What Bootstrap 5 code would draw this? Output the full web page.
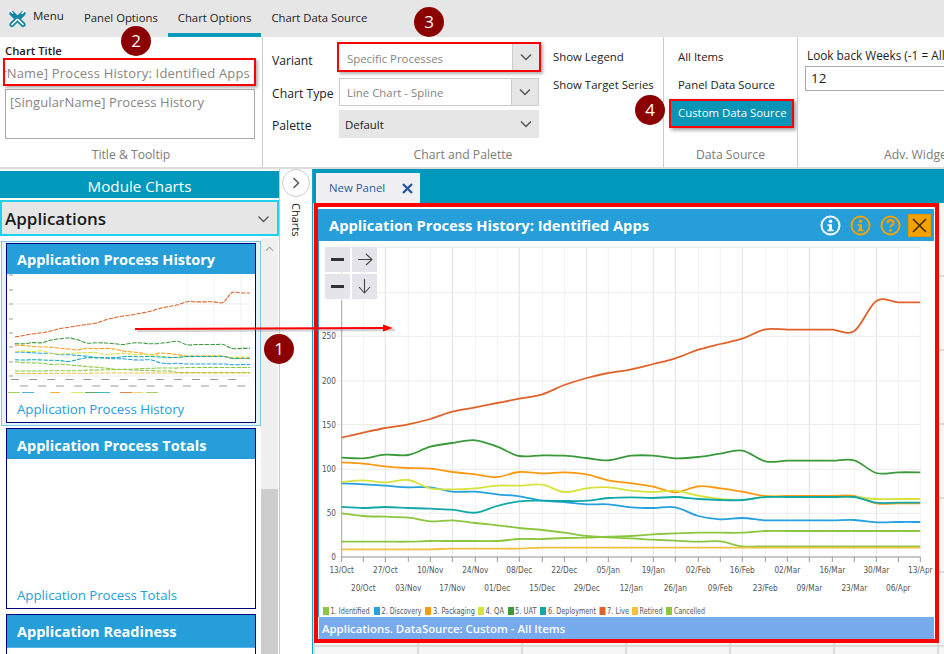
<!DOCTYPE html>
<html lang="en">
<head>
<meta charset="utf-8">
<title>Chart Options</title>
<link href="https://cdn.jsdelivr.net/npm/bootstrap@5.3.0/dist/css/bootstrap.min.css" rel="stylesheet">
<style>
html,body{height:100%;margin:0;overflow:hidden;background:#fff}
body{font-family:"Open Sans","Noto Sans",sans-serif;font-size:11.5px;color:#222}
.app-root{position:relative;width:944px;height:654px;overflow:hidden}
.tabstrip{height:37px;background:#e6e6e6}
.tabstrip .tabx{color:#222;padding:0 10px;height:37px;line-height:35px;font-size:11.3px}
.tabstrip .tabx.on{border-bottom:4px solid #0a9abb}
.menuitem{width:74px;padding-left:8px;height:37px}
.menuitem .menutxt{margin-top:-5px;margin-left:-2px}
.ribbon{height:132px;border-bottom:2px solid #dcdcdc;overflow:hidden}
.rgroup{height:130px;border-right:1px solid #ccc;flex:none;overflow:hidden}
.rgroup-body{height:105px}
.rgroup-foot{text-align:center;color:#7b7b7b;font-size:12.2px;line-height:25px;height:25px}
.g1{width:263px}.g2{width:401px}.g3{width:134px}.g4{width:146px;border-right:0}
.boldlbl{font-weight:600;font-size:11.3px;line-height:15px;padding:6px 0 0 5px;height:21px}
.titlebox{margin-left:3px;width:253px;height:28px;border:2px solid #f00;box-shadow:2px 2px 3px rgba(0,0,0,.3);color:#858585;font-size:13px;padding:0 4px 0 3px;white-space:nowrap;overflow:hidden;line-height:26px;letter-spacing:.2px}
.tipbox{margin:3px 0 0 5px;width:250px;height:50px;border:1px solid #aaa;color:#858585;font-size:13px;padding:4px 4px;line-height:17px;letter-spacing:.1px}
.ctlcol{width:281px;padding-top:5px;flex:none}
.formrow{display:flex;align-items:center;padding-left:9px}
.formrow .flabel{width:67px;font-size:12.2px;flex:none;padding-top:4px}
.row-a .flabel{padding-top:8px}
.sel{display:flex;width:200px;height:28px;border:1px solid #ccc;font-size:11.4px;color:#858585;flex:none}
.sel .val{flex:1;padding-left:7px;line-height:28px}
.sel .arr{width:27px;display:flex;align-items:center;justify-content:center;background:#e6e6e6;border-left:1px solid #ccc;flex:none}
.sel.hot{width:204px;height:30px;border:2px solid #f00;box-shadow:2px 2px 3px rgba(0,0,0,.3);margin-left:-2px}
.sel.hot .val{padding-left:8px;line-height:29px}
.sel.grey{background:#e6e6e6;border:0;color:#222}
.sel.grey .val{padding-left:6px;line-height:30px}
.sel.grey .arr{border-left:0}
.row-a{height:30px}.row-b{height:28px;margin-top:6px}.row-c{height:28px;margin-top:4px}
.togglecol{width:110px;padding:6px 0 0 9px;font-size:11.4px;flex:none;white-space:nowrap}
.togglecol div,.srcitem{height:28px;line-height:28px}
.srcbody{padding-top:6px}
.srcitem{padding-left:14px;font-size:11.4px}
.srcitem.hot{margin-left:5px;padding-left:7px;width:125px;height:29px;line-height:24px;border:2px solid #f00;background:#0a94b5;color:#fff;box-shadow:2px 2px 4px rgba(0,0,0,.4)}
.lookback{padding:10px 0 2px 9px;line-height:17px;white-space:nowrap;font-size:11.8px}
.numbox{margin-left:7px;height:25px;border:1px solid #aaa;width:170px;padding-left:5px;line-height:23px;font-size:13.5px}
.advfoot{white-space:nowrap;text-align:left;padding-left:86px}
.side{width:280px;border-right:1px solid #c8c8c8;flex:none;padding-top:2px}
.side-title{height:27px;background:#0099bb;color:#fff;text-align:center;font-size:15.2px;line-height:31px;margin-bottom:2px}
.appsel{height:36px;background:#e6e6e6;border:2px solid #1ed0f2;display:flex;align-items:center;justify-content:space-between;padding:2px 7px 0 3px;font-size:17px;font-weight:600;color:#1a1a1a}
.sidebody{height:418px;overflow:hidden;display:flex}
.cardcol{width:261px;flex:none;padding-top:5px}
.picked{margin-left:1px;width:260px;height:185px;border:1px solid #7cc7e8;background:#e5f3fb;padding:1px 4px 2px}
.chartcard{border:1px solid #00007f;border-radius:0;width:250px;background:#fff}
.chartcard .card-header{background:#259ed9;color:#fff;border:0;border-radius:0;padding:0 0 0 10px;height:30px;line-height:31px;font-weight:700;font-size:14.5px}
.chartcard .card-body{padding:0;display:flex;flex-direction:column}
.chartcard .cardlink{color:#259ed9;font-size:13.3px;padding-left:10px;line-height:18px;letter-spacing:-.05px}
.c1{height:180px}.c2{height:181px;margin:2px 0 5px 6px}.c3{height:60px;margin-left:6px}
.c1 .card-body{height:148px}
.c2 .card-body{height:149px;justify-content:flex-end;padding-bottom:4px}
.c1 .cardlink{padding-top:5px}
.c2 .card-header,.c3 .card-header{line-height:33px}
.c3 .card-header{height:33px;border-bottom:1px solid #55b2e2}
.scroller{width:17px;background:#f0f0f0;margin-top:2px;flex:none;display:flex;flex-direction:column;align-items:center}
.scroller .grip{background:#cdcdcd;width:17px;margin-top:auto;height:165px}
.strip{width:32px;flex:none;display:flex;flex-direction:column;align-items:center}
.roundbtn{width:28px;height:28px;border:1px solid #ccc;border-radius:50%;background:#fff;display:flex;align-items:center;justify-content:center}
.vtext{writing-mode:vertical-rl;font-size:11px;margin-top:6px;color:#222}
.work{width:632px;flex:none;border-left:1px solid #14a8c8;height:485px;background-color:#f6f6f6;
background-image:linear-gradient(to right,#dcdcdc 2px,transparent 2px),linear-gradient(#dcdcdc 2px,transparent 2px);background-size:104px 74px;background-position:0 0,0 32px}
.tealbar{height:34px;background:#0099bb;padding:4px 0 0 3px}
.doc-tab{width:104px;height:30px;background:#f0f0f4;color:#2a5a9c;font-size:11.4px;display:flex;align-items:center;justify-content:space-between;padding:0 7px 0 13px}
.frame{margin-left:1px;width:625px;height:440px;border:4px solid #f00;background:#fff;padding-top:2px}
.phead{height:32px;background:#259ed9;color:#fff;display:flex;align-items:center;justify-content:space-between;padding:0 3px 0 11px;width:616px}
.phead .ttl{font-weight:700;font-size:14.7px}
.pfoot{height:22px;background:#78aaee;color:#fff;font-weight:600;font-size:11.4px;line-height:23px;padding-left:3px;width:615px;margin-left:1px}
.closebtn{width:23px;height:23px;background:#f5a200;border:1px solid #e59500;display:flex;align-items:center;justify-content:center;margin-left:-2px}
.headicons{gap:9px}
.plotsvg{display:block}
.axt{font-family:"DejaVu Sans Condensed","Liberation Sans Narrow",sans-serif;font-size:8.2px;fill:#555}
.zoomface{fill:#e4e4ea}
.mark-n{position:absolute;width:30px;height:30px;border-radius:50%;background:#8b0000;color:#fff;font-size:17px;display:flex;align-items:center;justify-content:center;box-shadow:0 0 1px #fff}
.m1{left:264px;top:334px}.m2{left:121px;top:26px}.m3{left:414px;top:7px}.m4{left:635px;top:95px}
.redarrow{position:absolute;left:130px;top:318px;width:275px;height:20px;overflow:visible}
</style>
</head>
<body>
<div class="app-root">
  <nav class="tabstrip d-flex align-items-start">
    <div class="menuitem d-flex align-items-center gap-2">
      <svg width="19" height="19" viewBox="0 0 19 19" fill="none" stroke-linecap="round">
        <path d="M4 4.500 15 15.500M15 4.500 4 15.500" stroke="#1587a6" stroke-width="5.200"/>
        <path d="M10 10.500 15 15.500M9 10.500 4 15.500" stroke="#fff" stroke-width="1.700"/>
        <path d="M16.500 1.500 14 4.500M2 1.500 4.500 4" stroke="#fff" stroke-width="1.600"/>
      </svg>
      <span class="menutxt">Menu</span>
    </div>
    <div class="tabx">Panel Options</div>
    <div class="tabx on">Chart Options</div>
    <div class="tabx">Chart Data Source</div>
  </nav>

  <section class="ribbon d-flex">
    <div class="rgroup g1">
      <div class="rgroup-body">
        <div class="boldlbl">Chart Title</div>
        <div class="titlebox d-flex justify-content-end"><span>[SingularName] Process History: Identified Apps</span></div>
        <div class="tipbox">[SingularName] Process History</div>
      </div>
      <div class="rgroup-foot">Title &amp; Tooltip</div>
    </div>
    <div class="rgroup g2">
      <div class="rgroup-body d-flex">
        <div class="ctlcol">
          <div class="formrow row-a"><span class="flabel">Variant</span><div class="sel hot"><span class="val">Specific Processes</span><span class="arr"><svg width="12" height="8" viewBox="0 0 12 8" fill="none" stroke="#555" stroke-width="1.500"><path d="M1 1.500 6 6.500 11 1.500"/></svg></span></div></div>
          <div class="formrow row-b"><span class="flabel">Chart Type</span><div class="sel"><span class="val">Line Chart - Spline</span><span class="arr"><svg width="12" height="8" viewBox="0 0 12 8" fill="none" stroke="#555" stroke-width="1.500"><path d="M1 1.500 6 6.500 11 1.500"/></svg></span></div></div>
          <div class="formrow row-c"><span class="flabel">Palette</span><div class="sel grey"><span class="val">Default</span><span class="arr"><svg width="12" height="8" viewBox="0 0 12 8" fill="none" stroke="#555" stroke-width="1.500"><path d="M1 1.500 6 6.500 11 1.500"/></svg></span></div></div>
        </div>
        <div class="togglecol"><div>Show Legend</div><div>Show Target Series</div></div>
      </div>
      <div class="rgroup-foot">Chart and Palette</div>
    </div>
    <div class="rgroup g3">
      <div class="rgroup-body srcbody">
        <div class="srcitem">All Items</div>
        <div class="srcitem">Panel Data Source</div>
        <div class="srcitem hot">Custom Data Source</div>
      </div>
      <div class="rgroup-foot">Data Source</div>
    </div>
    <div class="rgroup g4">
      <div class="rgroup-body">
        <div class="lookback">Look back Weeks (-1 = All)</div>
        <div class="numbox">12</div>
      </div>
      <div class="rgroup-foot advfoot">Adv. Widget</div>
    </div>
  </section>

  <main class="d-flex">
    <aside class="side">
      <div class="side-title">Module Charts</div>
      <div class="appsel"><span>Applications</span><svg width="13" height="8" viewBox="0 0 12 8" fill="none" stroke="#555" stroke-width="1.300"><path d="M1 1.500 6 6.500 11 1.500"/></svg></div>
      <div class="sidebody">
        <div class="cardcol">
          <div class="picked">
            <div class="card chartcard c1">
              <div class="card-header">Application Process History</div>
              <div class="card-body">
                <svg id="thumb" width="248" height="121" viewBox="7 275 248 121"></svg>
                <div class="cardlink">Application Process History</div>
              </div>
            </div>
          </div>
          <div class="card chartcard c2">
            <div class="card-header">Application Process Totals</div>
            <div class="card-body"><div class="cardlink">Application Process Totals</div></div>
          </div>
          <div class="card chartcard c3">
            <div class="card-header">Application Readiness</div>
          </div>
        </div>
        <div class="scroller">
          <svg class="mt-2" width="9" height="6" viewBox="0 0 10 6" fill="none" stroke="#a6a6a6" stroke-width="1.300"><path d="M1 5 5 1 9 5"/></svg>
          <div class="grip"></div>
        </div>
      </div>
    </aside>
    <div class="strip">
      <div class="roundbtn"><svg width="8" height="12" viewBox="0 0 8 12" fill="none" stroke="#555" stroke-width="1.500"><path d="M1.500 1 6.500 6 1.500 11"/></svg></div>
      <div class="vtext">Charts</div>
    </div>
    <div class="work">
      <div class="tealbar">
        <div class="doc-tab"><span>New Panel</span><svg width="11" height="11" viewBox="0 0 11 11" stroke="#2a5a9c" stroke-width="2.400"><path d="M1 1 10 10M10 1 1 10"/></svg></div>
      </div>
      <div class="frame">
        <div class="phead">
          <span class="ttl">Application Process History: Identified Apps</span>
          <div class="d-flex align-items-center headicons">
            <svg width="21" height="21" viewBox="0 0 21 21"><circle cx="10.500" cy="10.500" r="9" fill="none" stroke="#fff" stroke-width="2"/><circle cx="10.500" cy="6.300" r="1.800" fill="#fff"/><path d="M7.500 9.200h4.500v5.300h1.500v1.800h-6v-1.800h1.500v-3.500H7.500z" fill="#fff"/></svg>
            <svg width="21" height="21" viewBox="0 0 21 21"><circle cx="10.500" cy="10.500" r="9" fill="none" stroke="#f5a200" stroke-width="2"/><circle cx="10.500" cy="6.300" r="1.800" fill="#f5a200"/><path d="M7.500 9.200h4.500v5.300h1.500v1.800h-6v-1.800h1.500v-3.500H7.500z" fill="#f5a200"/></svg>
            <svg width="21" height="21" viewBox="0 0 21 21"><circle cx="10.500" cy="10.500" r="9" fill="none" stroke="#f5a200" stroke-width="2"/><path d="M7.500 8.200c0-4 6-4 6 0 0 2-3 2-3 4.300" fill="none" stroke="#f5a200" stroke-width="2.200"/><circle cx="10.500" cy="15.300" r="1.500" fill="#f5a200"/></svg>
            <div class="closebtn"><svg width="15" height="15" viewBox="0 0 15 15" stroke="#3a2a00" stroke-width="1.500"><path d="M1 1 14 14M14 1 1 14"/></svg></div>
          </div>
        </div>
        <svg id="plot" class="plotsvg" width="616" height="376" viewBox="318 241 616 376"></svg>
        <div class="pfoot">Applications. DataSource: Custom - All Items</div>
      </div>
    </div>
  </main>

  <svg class="redarrow" viewBox="130 318 275 20">
    <path d="M137 331 395 330" stroke="#777" stroke-width="2.500" opacity=".3"/>
    <path d="M135 329 385 328" stroke="#f00" stroke-width="2" fill="none"/>
    <path d="M383 324.500 393 328 383 331.500z" fill="#f00"/>
  </svg>
  <div class="mark-n m1">1</div>
  <div class="mark-n m2">2</div>
  <div class="mark-n m3">3</div>
  <div class="mark-n m4">4</div>
</div>

<script src="https://cdn.jsdelivr.net/npm/bootstrap@5.3.0/dist/js/bootstrap.bundle.min.js"></script>
<script>
(function(){
const NS='http://www.w3.org/2000/svg';
const xs=[341.7,363.3,385.3,408.3,430.3,452.3,475.3,497.3,519.3,542.3,564.3,586.7,608.3,631.3,653.3,675.3,698.3,720.3,742.3,765.3,787.3,809.3,832.3,854.3,876.3,898.3,920.3];
const Y=z=>240+z/3;
const flat=(v,n)=>Array(n).fill(v);
const series=[
 ['#8cc63f',[820,828,830,833,844,841,849,856,864,870,878,888,892,895,899,902,905,904,919,...flat(919,8)]],
 ['#8cc63f',[905,905,905,905,903,903,903,903,897,897,894,893,890,888,883,880,878,878,878,...flat(873,8)]],
 ['#f0c040',[928,928,928,928,928,926,926,926,926,923,923,923,923,...flat(923,14)]],
 ['#25a0e0',[730,733,737,742,742,755,755,763,769,782,786,793,793,802,804,802,828,838,834,841,841,841,841,840,847,846,846]],
 ['#ff9a10',[667,671,679,684,686,696,703,711,696,700,697,703,721,730,740,757,739,745,755,768,768,768,768,768,790,790,790]],
 ['#d8e23c',[726,721,727,720,745,748,745,737,737,734,756,745,742,752,756,752,767,777,780,770,771,771,771,771,777,777,777]],
 ['#12a8a8',[801,804,801,804,806,809,818,798,784,782,783,782,774,772,774,771,777,780,780,771,771,771,771,771,788,788,788]],
 ['#3a9a3a',[653,655,644,645,620,609,601,620,648,646,647,654,661,647,647,655,651,641,632,664,662,662,662,661,699,697,697]],
 ['#e0622b',[593,578,564,553,537,515,502,489,476,463,435,414,399,388,372,355,329,312,296,268,269,269,269,273,183,187,187]]
];
function spline(ys){
  const p=ys.map((z,i)=>[xs[i],Y(z)]);
  let d=`M${p[0][0]} ${p[0][1].toFixed(1)}`;
  for(let i=0;i<p.length-1;i++){
    const a=p[Math.max(i-1,0)],b=p[i],c=p[i+1],e=p[Math.min(i+2,p.length-1)];
    const c1x=b[0]+(c[0]-a[0])/6,c1y=b[1]+(c[1]-a[1])/6,c2x=c[0]-(e[0]-b[0])/6,c2y=c[1]-(e[1]-b[1])/6;
    d+=` C${c1x.toFixed(1)} ${c1y.toFixed(1)} ${c2x.toFixed(1)} ${c2y.toFixed(1)} ${c[0]} ${c[1].toFixed(1)}`;
  }
  return d;
}
function el(parent,name,attrs,text){
  const n=document.createElementNS(NS,name);
  for(const k in attrs)n.setAttribute(k,attrs[k]);
  if(text!==undefined)n.textContent=text;
  parent.appendChild(n);return n;
}
const plot=document.getElementById('plot');
el(plot,'line',{x1:318.5,x2:318.5,y1:241,y2:617,stroke:'#259ed9'});
const major=new Set([0,2,5,8,11,14,15,18,21,24]);
xs.forEach((x,i)=>el(plot,'line',{x1:x,x2:x,y1:247,y2:557,stroke:major.has(i)?'#e2e2e2':'#f2f2f2','stroke-width':1}));
[[557,'0'],[513.3,'50'],[469.3,'100'],[424.5,'150'],[381,'200'],[336.3,'250'],[292.3,'300'],[247.3,'350']].forEach(([y,t])=>{
  el(plot,'line',{x1:337,x2:920.3,y1:y,y2:y,stroke:'#ececec','stroke-width':1});
  if(y>300)el(plot,'text',{class:'axt',x:336,y:y+3,'text-anchor':'end'},t);
});
el(plot,'line',{x1:341.7,x2:341.7,y1:300,y2:557,stroke:'#aaa'});
el(plot,'line',{x1:341.7,x2:920.3,y1:557,y2:557,stroke:'#999'});
xs.forEach(x=>el(plot,'line',{x1:x,x2:x,y1:557,y2:562,stroke:'#999'}));
const upper=['13/Oct','27/Oct','10/Nov','24/Nov','08/Dec','22/Dec','05/Jan','19/Jan','02/Feb','16/Feb','02/Mar','16/Mar','30/Mar','13/Apr'];
const lower=['20/Oct','03/Nov','17/Nov','01/Dec','15/Dec','29/Dec','12/Jan','26/Jan','09/Feb','23/Feb','09/Mar','23/Mar','06/Apr'];
upper.forEach((t,i)=>el(plot,'text',{class:'axt',x:xs[i*2],y:573,'text-anchor':'middle'},t));
lower.forEach((t,i)=>el(plot,'text',{class:'axt',x:xs[i*2+1],y:591,'text-anchor':'middle'},t));
series.forEach(([c,z])=>el(plot,'path',{d:spline(z),fill:'none',stroke:c,'stroke-width':1.8,'stroke-linejoin':'round'}));
[[323,330.6,39,'#8cc63f','1. Identified'],[374,381.6,40,'#25a0e0','2. Discovery'],[425,433,42,'#ff9a10','3. Packaging'],[478,485.5,18.5,'#d8e23c','4. QA'],[508,515,21.5,'#3a9a3a','5. UAT'],[540,548,48,'#12a8a8','6. Deployment'],[599.5,607,22,'#e0622b','7. Live'],[632,639.6,23,'#f0c040','Retired'],[666,674,31,'#8cc63f','Cancelled']].forEach(([sx,tx,w,c,t])=>{
  el(plot,'rect',{x:sx,y:607,width:6,height:8,fill:c});
  el(plot,'text',{class:'axt',x:tx,y:614,textLength:w,lengthAdjust:'spacingAndGlyphs'},t);
});
[[325,247],[352,247],[325,274],[352,274]].forEach(([x,y])=>el(plot,'rect',{class:'zoomface',x,y,width:25,height:25}));
el(plot,'rect',{x:331,y:258,width:13,height:3,fill:'#333'});
el(plot,'rect',{x:331,y:285,width:13,height:3,fill:'#333'});
el(plot,'path',{d:'M358 259.5H372M366 254 372 259.5 366 265',fill:'none',stroke:'#444','stroke-width':1.1});
el(plot,'path',{d:'M364.5 279V293M359 287 364.5 293 370 287',fill:'none',stroke:'#444','stroke-width':1.1});

const th=document.getElementById('thumb');
const sx=(250-15)/(920.3-341.7),sy=(377-276)/(557-247.3);
[187,214,241].forEach(x=>el(th,'line',{x1:x,x2:x,y1:276,y2:377,stroke:'#f0f0f0'}));
[305,377].forEach(y=>el(th,'line',{x1:15,x2:250,y1:y,y2:y,stroke:'#ececec'}));
const g=el(th,'g',{transform:`translate(${15-341.7*sx} ${377-557*sy}) scale(${sx} ${sy})`});
series.forEach(([c,z])=>el(g,'path',{d:spline(z),fill:'none',stroke:c,'stroke-width':3.2,'stroke-dasharray':'11 3'}));
for(const y of [276,291,305,320,334,348,363,377])el(th,'rect',{x:9,y:y-.5,width:4,height:1,fill:'#999'});
for(let x=15;x<=250;x+=18.1)el(th,'rect',{x:x-4,y:380,width:8,height:1,fill:'#999'});
for(let x=24;x<=250;x+=18.1)el(th,'rect',{x:x-4,y:386.5,width:8,height:1,fill:'#999'});
[[8,12,'#8cc63f'],[22,12,'#25a0e0'],[50,10,'#ff9a10'],[71,12,'#d8e23c'],[85,12,'#3a9a3a'],[96,14,'#12a8a8'],[120,12,'#e0622b'],[133,10,'#f0c040'],[146,12,'#8cc63f']].forEach(([x,w,c])=>el(th,'rect',{x,y:393,width:w,height:1,fill:c,opacity:.8}));
})();
</script>
</body>
</html>
